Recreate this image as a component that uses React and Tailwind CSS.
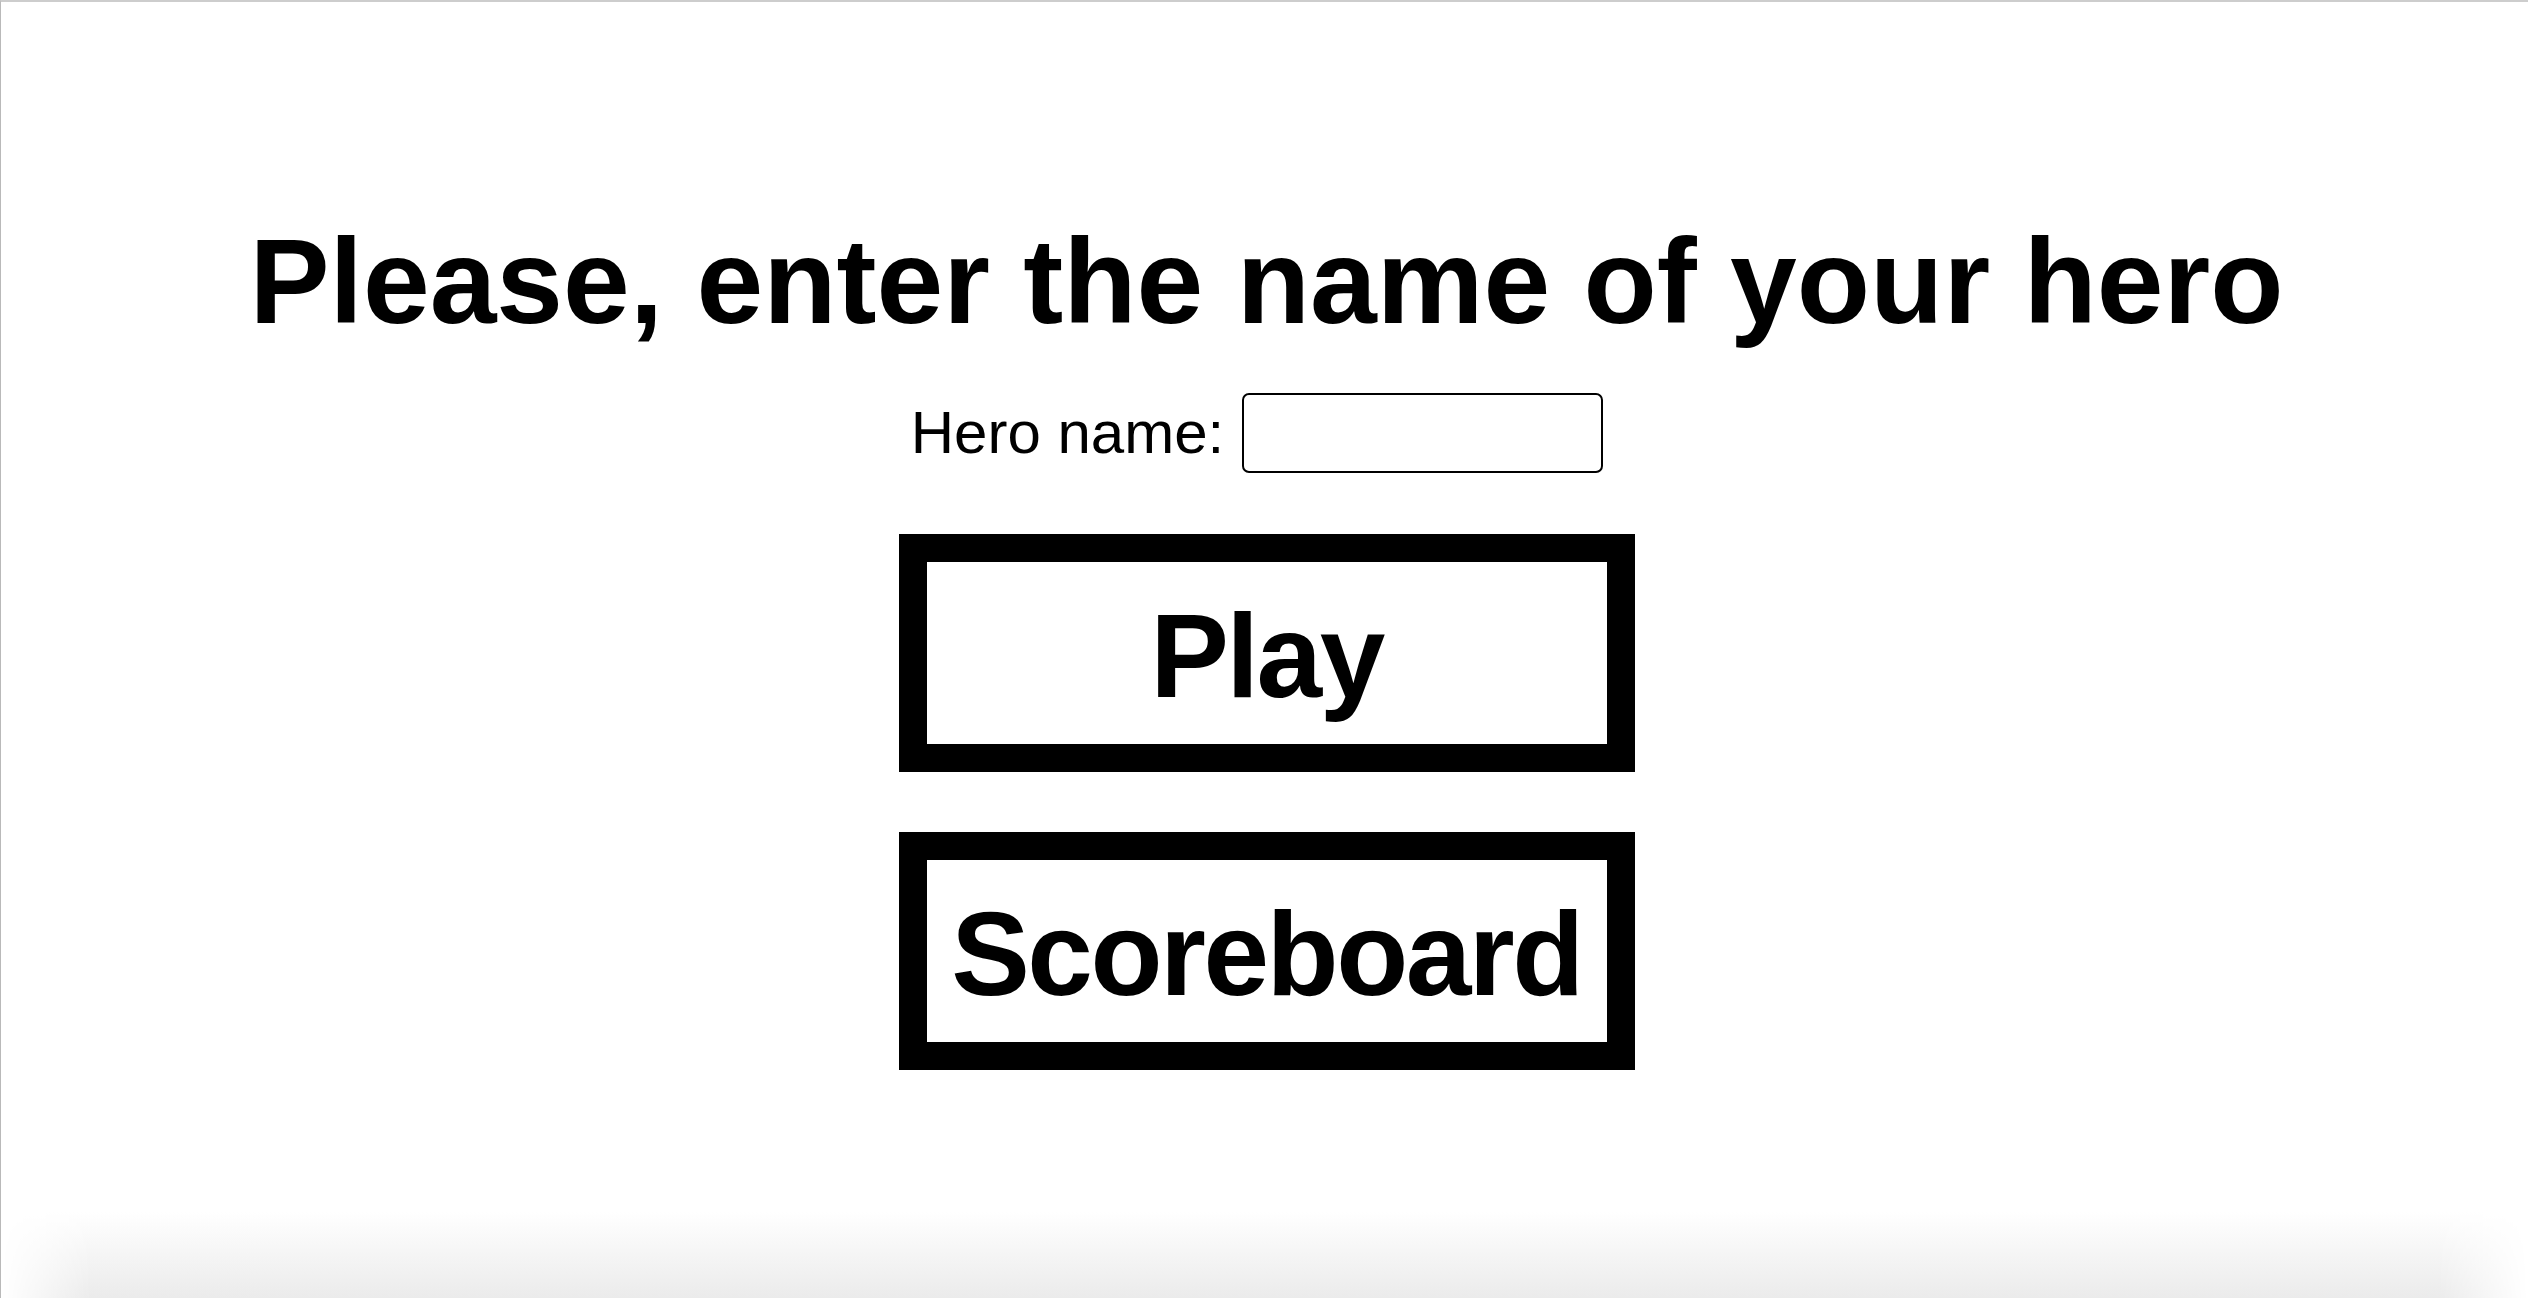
import React, { useState } from "react";

function BigButton({ children }) {
  return (
    <button
      type="button"
      className="flex h-[238px] w-[736px] items-center justify-center border-[28px] border-black bg-white pt-[6px] text-[118px] font-bold leading-none tracking-[-2.5px] text-black"
    >
      {children}
    </button>
  );
}

export default function App() {
  const [name, setName] = useState("");

  return (
    <div className="flex h-screen flex-col overflow-hidden border-l border-t-2 border-l-[#b9b9b9] border-t-[#cdcdcd] bg-white font-['Liberation_Sans',Arial,sans-serif] text-black">
      <main className="flex flex-col items-center pl-[4px] pt-[219px]">
        <h1 className="text-[120px] font-bold leading-none">
          Please, enter the name of your hero
        </h1>

        <label className="mt-[52px] flex items-center gap-[18px] pr-[19px]">
          <span className="text-[60px] leading-none">Hero name:</span>
          <input
            value={name}
            onChange={(e) => setName(e.target.value)}
            className="h-[80px] w-[361px] rounded-[7px] border-2 border-black bg-white px-3 text-[40px] outline-none"
          />
        </label>

        <div className="mt-[61px] flex flex-col gap-[60px]">
          <BigButton>Play</BigButton>
          <BigButton>Scoreboard</BigButton>
        </div>
      </main>

      <div className="flex-1" />
      <div className="h-[86px] shrink-0 bg-gradient-to-b from-white to-[#ebebeb] [mask-image:linear-gradient(to_right,transparent,black_90px,black_calc(100%-90px),transparent)]" />
    </div>
  );
}
